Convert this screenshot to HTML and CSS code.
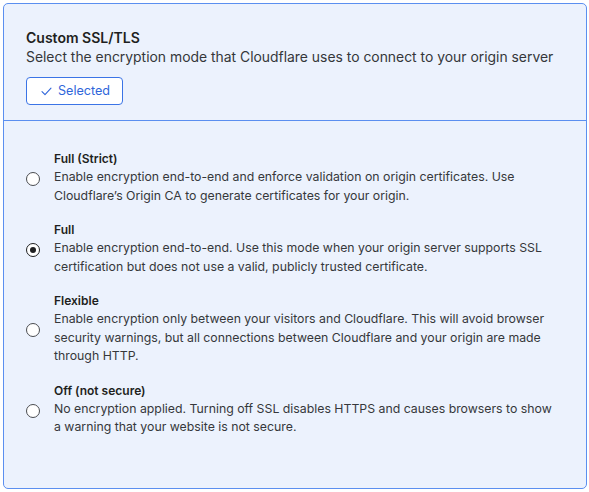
FILE: index.html
```html
<!DOCTYPE html>
<html lang="en">
<head>
<meta charset="utf-8">
<title>Custom SSL/TLS</title>
<link rel="stylesheet" href="styles.css">
</head>
<body>
<div class="card">
  <div class="card-header">
    <div class="title">Custom SSL/TLS</div>
    <div class="subtitle">Select the encryption mode that Cloudflare uses to connect to your origin server</div>
    <button class="selected-btn" type="button">
      <svg class="check" width="11" height="9" viewBox="0 0 11 9"><path d="M1 4.6 L4 7.6 L10 1.2" fill="none" stroke="currentColor" stroke-width="1.1" stroke-linecap="round" stroke-linejoin="round"/></svg>
      <span>Selected</span>
    </button>
  </div>
  <div class="options">
    <label class="option">
      <span class="radio"></span>
      <span class="option-text">
        <span class="option-title">Full (Strict)</span>
        <span class="option-desc">Enable encryption end-to-end and enforce validation on origin certificates. Use Cloudflare’s Origin CA to generate certificates for your origin.</span>
      </span>
    </label>
    <label class="option">
      <span class="radio checked"></span>
      <span class="option-text">
        <span class="option-title">Full</span>
        <span class="option-desc">Enable encryption end-to-end. Use this mode when your origin server supports SSL certification but does not use a valid, publicly trusted certificate.</span>
      </span>
    </label>
    <label class="option">
      <span class="radio"></span>
      <span class="option-text">
        <span class="option-title">Flexible</span>
        <span class="option-desc">Enable encryption only between your visitors and Cloudflare. This will avoid browser security warnings, but all connections between Cloudflare and your origin are made through HTTP.</span>
      </span>
    </label>
    <label class="option">
      <span class="radio"></span>
      <span class="option-text">
        <span class="option-title">Off (not secure)</span>
        <span class="option-desc">No encryption applied. Turning off SSL disables HTTPS and causes browsers to show a warning that your website is not secure.</span>
      </span>
    </label>
  </div>
</div>
</body>
</html>
```

FILE: styles.css
```css
* { box-sizing: border-box; }
html, body { margin: 0; padding: 0; background: #ffffff; }
body {
  padding: 3px;
  font-family: Inter, "Noto Sans", "Liberation Sans", sans-serif;
  color: #222426;
}
.card {
  width: 584px;
  height: 486px;
  border: 1px solid #5b8ff0;
  border-radius: 5px;
  background: #ecf2fd;
  display: flex;
  flex-direction: column;
}
.card-header {
  padding: 24px 22px 15px;
  border-bottom: 1px solid #5b8ff0;
}
.title {
  font-size: 14px;
  line-height: 19px;
  font-weight: 600;
  color: #1e1f21;
}
.subtitle {
  font-size: 13.9px;
  line-height: 21px;
  color: #35373a;
  white-space: nowrap;
}
.selected-btn {
  margin-top: 9px;
  display: inline-flex;
  align-items: center;
  gap: 6px;
  height: 28px;
  padding: 0 12px 0 14px;
  border: 1px solid #3b74e6;
  border-radius: 4px;
  background: #ffffff;
  color: #2f66da;
  font-family: inherit;
  font-size: 12.6px;
  line-height: 16px;
}
.check { display: block; margin-top: 1px; }
.options {
  padding: 29px 30px 0 22px;
  display: flex;
  flex-direction: column;
  gap: 16px;
}
.option {
  display: flex;
  align-items: center;
  gap: 14px;
}
.radio {
  flex: none;
  width: 14px;
  height: 14px;
  border: 1px solid #4a4c50;
  border-radius: 50%;
  background: #ffffff;
  position: relative;
  margin-top: 3px;
}
.radio.checked { border-color: #1e1f21; }
.radio.checked::after {
  content: "";
  position: absolute;
  left: 3px;
  top: 3px;
  width: 6px;
  height: 6px;
  border-radius: 50%;
  background: #1e1f21;
}
.option-text {
  display: flex;
  flex-direction: column;
  gap: 1px;
}
.option-title {
  font-size: 12px;
  line-height: 17px;
  font-weight: 600;
  color: #1e1f21;
}
.option-desc {
  font-size: 12.3px;
  line-height: 18.5px;
  color: #36383b;
}
```
